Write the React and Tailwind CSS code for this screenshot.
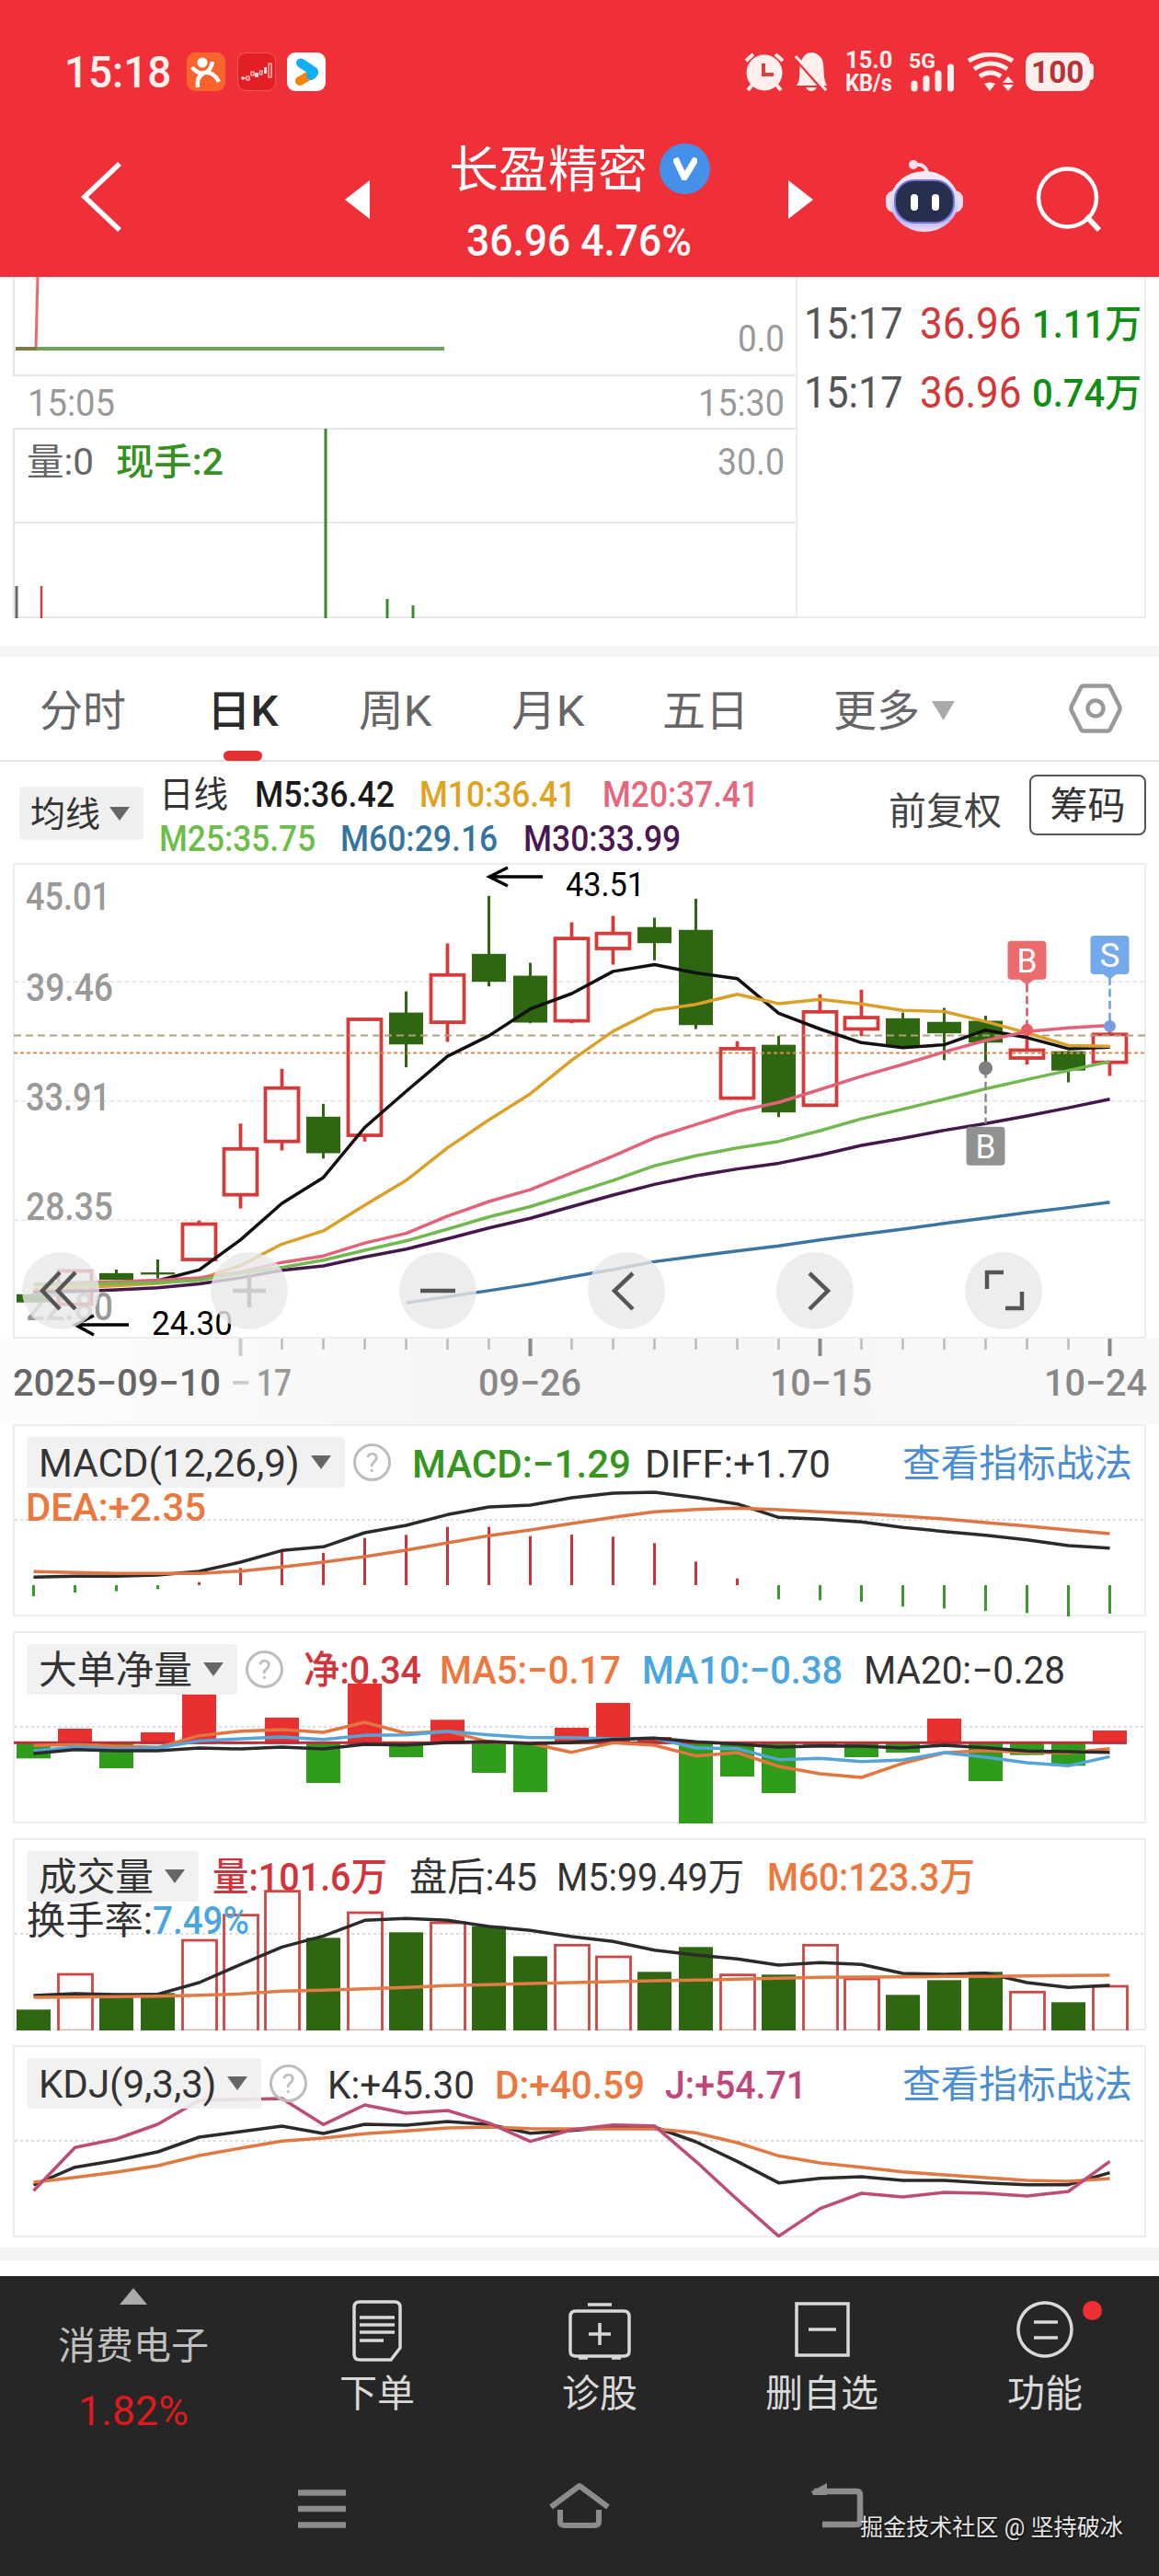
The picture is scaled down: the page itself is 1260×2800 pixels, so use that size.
import { useLayoutEffect, useRef, useState } from "react";

const FONT = "Roboto, 'Noto Sans CJK SC', sans-serif"
const RED = "#d43c3c"
const GREEN = "#2f6612"

// candles: [kind, high, top, bottom, low] in chart units
const candles = [
    ["g", 1252, 1252, 1275, 1275],
    ["r", 1185, 1187, 1280, 1280],
    ["g", 1183, 1193, 1212, 1212],
    ["g", 1155, 1191, 1197, 1208],
    ["r", 1046, 1056, 1155, 1160],
    ["r", 775, 846, 974, 1012],
    ["r", 622, 676, 825, 850],
    ["g", 720, 756, 858, 873],
    ["r", 480, 484, 808, 825],
    ["g", 406, 465, 554, 618],
    ["r", 272, 360, 492, 547],
    ["g", 139, 301, 379, 392],
    ["g", 326, 362, 493, 495],
    ["r", 213, 258, 488, 495],
    ["r", 195, 244, 286, 331],
    ["g", 200, 226, 271, 319],
    ["g", 147, 234, 500, 511],
    ["r", 545, 566, 704, 706],
    ["g", 530, 555, 744, 757],
    ["r", 414, 463, 724, 724],
    ["r", 401, 479, 511, 531],
    ["g", 465, 481, 559, 560],
    ["g", 452, 491, 523, 598],
    ["g", 474, 488, 549, 618],
    ["r", 520, 570, 592, 610],
    ["g", 573, 573, 627, 660],
    ["r", 500, 526, 604, 642],
]

const m5 = [1245, 1236, 1224, 1214, 1184, 1100, 998, 926, 786, 685, 587, 530, 455, 412, 350, 331, 354, 370, 467, 511, 549, 563, 555, 514, 535, 566, 562]
const m10 = [1238, 1234, 1228, 1222, 1210, 1172, 1112, 1075, 1003, 934, 843, 765, 692, 598, 517, 459, 442, 414, 440, 428, 441, 459, 462, 490, 522, 557, 559]
const m20 = [1224, 1220, 1217, 1213, 1206, 1190, 1163, 1145, 1109, 1082, 1034, 993, 960, 913, 866, 815, 778, 741, 716, 680, 643, 610, 575, 543, 518, 508, 501]
const m25 = [1226, 1224, 1222, 1220, 1213, 1193, 1177, 1157, 1129, 1103, 1070, 1036, 1007, 971, 934, 893, 865, 843, 825, 795, 762, 735, 707, 678, 652, 627, 602]
const m30 = [1246, 1244, 1240, 1234, 1223, 1206, 1185, 1173, 1148, 1126, 1097, 1067, 1040, 1007, 975, 945, 921, 902, 886, 863, 836, 816, 794, 775, 754, 731, 707]
const m60 = [1276, 1259, 1242, 1224, 1203, 1183, 1161, 1146, 1131, 1117, 1100, 1085, 1070, 1054, 1039, 1024, 1010, 995]

const diff = [552, 549, 549, 545, 533, 503, 465, 453, 407, 383, 348, 323, 317, 293, 278, 275, 292, 313, 357, 363, 372, 390, 403, 415, 430, 449, 457]
const dea = [534, 537, 540, 540, 540, 532, 519, 503, 485, 464, 440, 417, 398, 377, 357, 339, 331, 327, 332, 339, 345, 353, 362, 374, 385, 398, 410]
const macdBars = [614, 602, 598, 591, 568, 522, 465, 473, 424, 414, 388, 388, 418, 413, 420, 441, 501, 556, 624, 627, 632, 648, 654, 662, 669, 681, 671]

const netBars = [451, 357, 483, 369, 244, 399, 321, 531, 210, 447, 328, 498, 561, 354, 273, 384, 666, 510, 564, 410, 447, 432, 324, 525, 440, 475, 363]
const net5 = [412, 409, 414, 418, 380, 365, 360, 369, 336, 372, 365, 400, 405, 434, 403, 411, 446, 435, 480, 504, 516, 470, 436, 428, 434, 436, 422]
const net10 = [430, 417, 424, 420, 397, 390, 384, 392, 379, 377, 366, 377, 386, 386, 390, 388, 420, 422, 458, 454, 464, 459, 435, 450, 468, 478, 448]
const net20 = [438, 425, 429, 429, 420, 423, 417, 423, 408, 410, 402, 399, 406, 402, 392, 388, 400, 407, 417, 413, 414, 420, 411, 419, 430, 432, 434]

const volBars = [
    ["g", 582], ["r", 467], ["g", 540], ["g", 528], ["r", 356], ["r", 274], ["r", 196], ["g", 348], ["r", 266],
    ["g", 330], ["r", 299], ["g", 310], ["g", 408], ["r", 372], ["r", 410], ["g", 459], ["g", 378], ["r", 469],
    ["g", 468], ["r", 372], ["r", 482], ["g", 534], ["g", 486], ["g", 459], ["r", 525], ["g", 558], ["r", 506],
]
const vol5 = [536, 530, 533, 532, 494, 435, 378, 342, 291, 285, 291, 311, 324, 344, 360, 388, 404, 417, 437, 429, 435, 464, 467, 463, 494, 510, 503]
const vol60 = [542, 541, 540, 538, 535, 531, 522, 519, 514, 510, 504, 501, 497, 494, 491, 488, 486, 483, 480, 477, 476, 475, 474, 474, 472, 471, 470]

const kdjK = [495, 437, 415, 387, 339, 321, 303, 327, 297, 300, 288, 298, 326, 317, 305, 306, 354, 418, 488, 473, 468, 480, 480, 488, 494, 494, 455]
const kdjD = [486, 470, 453, 432, 399, 375, 352, 342, 328, 319, 309, 306, 311, 312, 312, 312, 325, 357, 400, 423, 437, 452, 462, 471, 480, 483, 474]
const kdjJ = [514, 373, 345, 297, 219, 216, 213, 298, 234, 261, 252, 293, 353, 315, 299, 302, 418, 542, 662, 572, 522, 534, 519, 522, 531, 516, 418]

const cx = (i) => 21.5 + 45 * i
const yk = (v) => (v - 47) / 2.5705
const scaleFrom = (top) => (v) => (v - top) / 3

// squeezes a line of text to the given width
function Fit({ w, className = "", children }) {
    const ref = useRef(null)
    const [scale, setScale] = useState(1)
    useLayoutEffect(() => {
        setScale(w / ref.current.offsetWidth)
    }, [w])
    return (
        <span className={`block shrink-0 whitespace-nowrap ${className}`} style={{ width: w }}>
            <span ref={ref} className="inline-block origin-left" style={{ transform: `scaleX(${scale})` }}>{children}</span>
        </span>
    )
}

function T({ x, y, w, size = 42, fill = "#333", weight = 400, children }) {
    return (
        <text x={x} y={y} textLength={w} lengthAdjust="spacingAndGlyphs" fontSize={size} fill={fill} fontWeight={weight} fontFamily={FONT}>
            {children}
        </text>
    )
}

function Line({ data, y, color, from = 0, width = 3.5 }) {
    return (
        <polyline
            points={data.map((v, i) => `${cx(i + from)},${y(v)}`).join(" ")}
            fill="none" stroke={color} strokeWidth={width} strokeLinejoin="round"
        />
    )
}

function Down({ className = "" }) {
    return <svg viewBox="0 0 22 15" className={`h-[15px] w-[22px] shrink-0 ${className}`}><path d="M0 0h22L11 15z" fill="currentColor"/></svg>
}

function Panel({ name, nameWidth, help, link, children }) {
    return (
        <div className="relative mx-[14px] h-[209px] w-[1232px] ring-2 ring-inset ring-[#ededed]">
            <svg viewBox="0 0 1232 209" className="block h-full w-full">
                <path d="M2 104H1230" stroke="#ddd" strokeWidth="2" strokeDasharray="3 3"/>
                <g transform="translate(1 0)">{children}</g>
            </svg>
            <div className="absolute inset-x-0 top-[14px] flex h-[55px] items-center pl-[15px] pr-[15px]">
                <div className="flex h-full items-center gap-[12px] rounded bg-[#efefef]/90 pl-[13px] pr-[15px] text-[42px] leading-none text-[#333]">
                    <Fit w={nameWidth} className="pt-[3px]">{name}</Fit>
                    <Down className="text-[#666]"/>
                </div>
                {help && (
                    <div className="ml-[9px] flex size-[41px] items-center justify-center rounded-full border-3 border-[#bdbdbd] text-[30px] leading-none text-[#bdbdbd]">?</div>
                )}
                {link && <Fit w={250} className="ml-auto pt-[4px] text-[41px] leading-none text-[#4a8dd2]">{link}</Fit>}
            </div>
        </div>
    )
}

function StatusBar() {
    return (
        <div className="flex h-[42px] items-center pl-[70px] text-[#fff0ee]">
            <Fit w={116} className="text-[49px] font-medium leading-none">15:18</Fit>
            <svg viewBox="0 0 42 42" className="ml-[17px] size-[42px]">
                <rect width="42" height="42" rx="9" fill="#f9642c"/>
                <circle cx="17" cy="11" r="5.5" fill="#fff"/>
                <path d="M6 16c4 6 9 7 14 6 5-2 7-6 8-12M19 22c8-1 13 4 16 10M18 23c-6 3-7 8-6 15" fill="none" stroke="#fff" strokeWidth="4.5"/>
            </svg>
            <svg viewBox="0 0 42 42" className="ml-[13px] size-[42px]">
                <rect x=".5" y=".5" width="41" height="41" rx="9" fill="#e31f26" stroke="#f25a52"/>
                <path d="M4 28h5M6 26v4" stroke="#ffd9d2" strokeWidth="1.6"/>
                <path d="M10 26h3v4h-3zM15 21h3v4h-3zM24.500 20h2.500v4h-2.500zM34 12h3v15h-3z" fill="none" stroke="#ffd9d2" strokeWidth="1.2"/>
                <path d="M19 22h4v5h-4zM29 16h3v7h-3z" fill="#ffd9d2"/>
            </svg>
            <svg viewBox="0 0 42 42" className="ml-[12px] size-[42px]">
                <rect width="42" height="42" rx="9" fill="#fff"/>
                <path d="M14 31L26 24" stroke="#f98209" strokeWidth="10" strokeLinecap="round"/>
                <path d="M15 11.500L28 20Q31 22 26 25" fill="none" stroke="#15aef5" strokeWidth="10" strokeLinecap="round" strokeLinejoin="round"/>
            </svg>
            <svg viewBox="0 0 44 42" className="ml-[455px] h-[42px] w-[44px]">
                <path d="M2 9l8-7M42 9l-8-7M9 35l-5 6M35 35l5 6" stroke="#fff0ee" strokeWidth="4"/>
                <circle cx="22" cy="22" r="19.500" fill="#fff0ee"/>
                <path d="M21 12v12h11" fill="none" stroke="#d9413f" strokeWidth="4"/>
            </svg>
            <svg viewBox="0 0 36 42" className="ml-[11px] h-[42px] w-[36px]">
                <path d="M2 36c5-7 2-14 4-23C8 4 13 0 18 0s12 4 13 12c1 10 0 17 4 24zM12 38h12q-2 4-6 4t-6-4z" fill="#fff0ee"/>
                <path d="M-1 4L34 44" stroke="#f03038" strokeWidth="4"/>
                <path d="M1 4L34 41" stroke="#fff0ee" strokeWidth="3"/>
            </svg>
            <div className="ml-[19px] flex flex-col text-[25px] font-bold leading-[25px]">
                <Fit w={51}>15.0</Fit>
                <Fit w={51}>KB/s</Fit>
            </div>
            <div className="ml-[18px] h-[42px] w-[50px]">
                <svg viewBox="0 0 50 42" className="size-full overflow-visible">
                    <T x="0" y="16.5" w="29" size={22} fill="#fff0ee" weight={700}>5G</T>
                    <path d="M6 34v5M19 28.500v10.500M32 23v16M45.500 16v23" stroke="#fff0ee" strokeWidth="7" strokeLinecap="round"/>
                </svg>
            </div>
            <svg viewBox="0 0 52 42" className="ml-[13px] h-[42px] w-[52px]">
                <path d="M2 9Q26-5 50 9M8 18Q26 6 44 18M14 26Q26 18 37 26" fill="none" stroke="#fff0ee" strokeWidth="5"/>
                <path d="M19 34q6-3 12 0l-6 8zM39 33l6-7 6 7zM39 35l6 7 6-7z" fill="#fff0ee"/>
            </svg>
            <div className="ml-[12px] flex h-[42px] w-[70px] items-center justify-center rounded-[12px] bg-[#fff0ee] text-[34px] font-bold leading-none text-[#b73335]">
                <Fit w={58}>100</Fit>
            </div>
            <div className="h-[18px] w-[4px] rounded-r bg-[#fff0ee]"/>
        </div>
    )
}

function Header() {
    return (
        <header className="h-[301px] bg-[#f03038] pt-[57px] text-white">
            <StatusBar/>
            <div className="flex h-[202px] items-start pl-[88px]">
                <svg viewBox="0 0 46 78" className="mt-[76px] h-[78px] w-[46px]"><path d="M42 3L4 39l38 36" fill="none" stroke="#fff" strokeWidth="5.500"/></svg>
                <svg viewBox="0 0 27 42" className="ml-[241px] mt-[97px] h-[42px] w-[27px]"><path d="M27 0v42L0 21z" fill="#fff"/></svg>
                <div className="ml-[86px] w-[291px]">
                    <div className="mt-[56px] flex items-center">
                        <span className="text-[54px] leading-[62px]">长盈精密</span>
                        <div className="-mt-[6px] ml-[13px] flex size-[55px] items-center justify-center rounded-full bg-[#4590e8]">
                            <svg viewBox="0 0 26 25" className="h-[25px] w-[26px]"><path d="M2 1l10 21L25 1" fill="none" stroke="#fff" strokeWidth="7"/></svg>
                        </div>
                    </div>
                    <Fit w={245} className="ml-[19px] mt-[20px] text-[48px] font-medium leading-[50px]">36.96 4.76%</Fit>
                </div>
                <svg viewBox="0 0 27 42" className="ml-[78px] mt-[97px] h-[42px] w-[27px]"><path d="M0 0v42L27 21z" fill="#fff"/></svg>
                <svg viewBox="0 0 84 78" className="ml-[79px] mt-[75px] h-[78px] w-[84px]">
                    <defs>
                        <linearGradient id="shell" x1="0" y1="0" x2="0" y2="1">
                            <stop offset="0" stopColor="#fbeef5"/>
                            <stop offset=".5" stopColor="#d5dcfa"/>
                            <stop offset=".8" stopColor="#b9b4f2"/>
                            <stop offset="1" stopColor="#eddcf3"/>
                        </linearGradient>
                    </defs>
                    <path d="M31 5q12-2 14 9" fill="none" stroke="#f9e4ec" strokeWidth="4"/>
                    <circle cx="30" cy="5" r="5" fill="#f5dfea"/>
                    <rect x="0" y="33" width="84" height="24" rx="9" fill="#f0dcf0"/>
                    <ellipse cx="42" cy="45" rx="37" ry="33" fill="url(#shell)"/>
                    <rect x="10" y="22" width="64" height="46" rx="21" fill="#26304e" stroke="#7472d8" strokeWidth="2"/>
                    <path d="M31 41v10M54 41v10" stroke="#fff" strokeWidth="8" strokeLinecap="round"/>
                </svg>
                <svg viewBox="0 0 72 72" className="ml-[79px] mt-[82px] size-[72px]">
                    <circle cx="34.500" cy="34" r="31.500" fill="none" stroke="#fff" strokeWidth="4.500"/>
                    <path d="M55 54l14 15" stroke="#fff" strokeWidth="5.500"/>
                </svg>
            </div>
        </header>
    )
}

function AfterHours() {
    return (
        <section className="flex h-[401px] pl-[14px] pr-[14px]">
            <svg viewBox="0 0 853 371" className="h-[371px] w-[853px]">
                <path d="M1 0V107H853M1 370V165H853M1 370H853M1 267H853" fill="none" stroke="#e6e6e6" strokeWidth="2"/>
                <path d="M852 0V370" stroke="#ececec" strokeWidth="2"/>
                <path d="M27 0L25 78" stroke="#ea6a64" strokeWidth="3"/>
                <path d="M3 78H469" stroke="#6fa35c" strokeWidth="4"/>
                <path d="M3 78H26" stroke="#7d7a45" strokeWidth="4"/>
                <path d="M340 165V371M407 350V371M435 357V371" stroke="#3a8a2a" strokeWidth="3"/>
                <path d="M4 336V371" stroke="#666" strokeWidth="3"/>
                <path d="M31 336V371" stroke={RED} strokeWidth="2.500"/>
                <T x="788" y="81" w="51" size={40} fill="#999">0.0</T>
                <T x="16" y="151" w="95" size={40} fill="#999">15:05</T>
                <T x="745" y="151" w="94" size={40} fill="#999">15:30</T>
                <T x="766" y="215" w="73" size={40} fill="#999">30.0</T>
                <T x="15" y="215" w="73" size={40} fill="#666">量:0</T>
                <T x="112" y="215" w="117" size={40} fill="#35921f" weight={500}>现手:2</T>
            </svg>
            <div className="h-[371px] w-[379px] border-b-2 border-r-2 border-[#eee] pl-[7px] pt-[13px]">
                {["1.11万", "0.74万"].map((amount) => (
                    <div key={amount} className="flex h-[75px] items-center text-[48px] leading-none text-[#555]">
                        <Fit w={108}>15:17</Fit>
                        <Fit w={111} className="ml-[18px] text-[#d5363a]">36.96</Fit>
                        <Fit w={119} className="ml-[11px] pt-[2px] text-[42px] font-medium text-[#0f8f14]">{amount}</Fit>
                    </div>
                ))}
            </div>
        </section>
    )
}

function Tabs() {
    return (
        <div className="flex h-[114px] items-center border-b-2 border-[#e4e4e4] pl-[43px] pt-[4px] text-[47px] leading-none text-[#666]">
            <span className="w-[94px]">分时</span>
            <div className="relative ml-[88px] font-medium text-[#2b2b2b]">
                <Fit w={78}>日K</Fit>
                <div className="absolute -bottom-[31px] left-[18px] h-[11px] w-[42px] rounded-full bg-[#e53033]"/>
            </div>
            <Fit w={80} className="ml-[87px]">周K</Fit>
            <Fit w={80} className="ml-[86px]">月K</Fit>
            <span className="ml-[84px]">五日</span>
            <span className="ml-[92px]">更多</span>
            <svg viewBox="0 0 25 21" className="ml-[13px] h-[21px] w-[25px]"><path d="M0 0h25L12.500 21z" fill="#aaa"/></svg>
            <svg viewBox="0 0 58 54" className="-mt-[4px] ml-[124px] h-[54px] w-[58px]">
                <path d="M16 2.500h26q2 0 3 2l10 20q1 2.500 0 5l-10 20q-1 2-3 2H16q-2 0-3-2l-10-20q-1-2.500 0-5l10-20q1-2 3-2z" fill="none" stroke="#999" strokeWidth="4.500"/>
                <circle cx="29" cy="27" r="8.500" fill="none" stroke="#999" strokeWidth="4.500"/>
            </svg>
        </div>
    )
}

function AverageRow() {
    return (
        <div className="flex h-[110px] items-start pl-[21px]">
            <div className="mt-[27px] flex h-[58px] w-[135px] items-center gap-[10px] rounded bg-[#f0f0f0] pl-[12px] text-[38px] leading-none text-[#333]">
                <span className="pt-[2px]">均线</span>
                <Down className="text-[#666]"/>
            </div>
            <div className="ml-[17px] mt-[12px] w-[760px] text-[39px] leading-[48px]">
                <div className="flex">
                    <Fit w={75} className="text-[#333]">日线</Fit>
                    <Fit w={152} className="ml-[29px] font-medium text-[#1a1a1a]">M5:36.42</Fit>
                    <Fit w={170} className="ml-[27px] font-medium text-[#dfa31f]">M10:36.41</Fit>
                    <Fit w={170} className="ml-[29px] font-medium text-[#e8667c]">M20:37.41</Fit>
                </div>
                <div className="flex">
                    <Fit w={170} className="font-medium text-[#6dbd4b]">M25:35.75</Fit>
                    <Fit w={171} className="ml-[27px] font-medium text-[#34749f]">M60:29.16</Fit>
                    <Fit w={171} className="ml-[28px] font-medium text-[#4a1850]">M30:33.99</Fit>
                </div>
            </div>
            <span className="ml-[33px] mt-[33px] text-[41px] leading-[42px] text-[#444]">前复权</span>
            <div className="ml-[30px] mt-[14px] flex h-[66px] w-[127px] items-center justify-center rounded-lg border-2 border-[#555] pt-[3px] text-[41px] leading-none text-[#333]">筹码</div>
        </div>
    )
}

function Marker({ i, top, color, letter }) {
    return (
        <g>
            <rect x={cx(i) - 21} y={top} width="42" height="42" rx="4" fill={color}/>
            <T x={cx(i) - 11} y={top + 34} w="22" size={37} fill="#fff">{letter}</T>
        </g>
    )
}

function KChart() {
    const buttons = [
        ["M41 22L22 42l19 20M58 22L39 42l19 20", "#555"],
        ["M24 42h36M42 24v36", "#cbcbcb"],
        ["M23 42h38", "#555"],
        ["M49 23L29 42l20 20", "#555"],
        ["M36 23l20 19-20 20", "#555"],
        ["M24 40V22h18M44 61h18V43", "#555"],
    ]
    return (
        <div className="relative mx-[14px] h-[517px] w-[1232px] ring-2 ring-inset ring-[#ededed]">
            <svg viewBox="-1 0 1232 517" className="block h-full w-full">
                {[379, 712, 1045].map((v) => (
                    <path key={v} d={`M0 ${yk(v)}H1231`} stroke="#e3e3e3" strokeWidth="1.500" strokeDasharray="5 3"/>
                ))}
                <T x="13" y={yk(177)} w="92" fill="#999" weight={500}>45.01</T>
                <T x="13" y={yk(433)} w="95" fill="#999" weight={500}>39.46</T>
                <T x="13" y={yk(738)} w="92" fill="#999" weight={500}>33.91</T>
                <T x="13" y={yk(1045)} w="95" fill="#999" weight={500}>28.35</T>
                <T x="13" y={yk(1325)} w="95" fill="#999" weight={500}>22.80</T>
                {candles.map(([kind, high, top, bottom, low], i) => kind === "g" ? (
                    <g key={i} fill={GREEN}>
                        <rect x={cx(i) - 1.5} y={yk(high)} width="3" height={yk(low) - yk(high)}/>
                        <rect x={cx(i) - 18.5} y={yk(top)} width="37" height={yk(bottom) - yk(top)}/>
                    </g>
                ) : (
                    <g key={i} stroke={RED} strokeWidth="3.8" fill="none">
                        <path d={`M${cx(i)} ${yk(high)}V${yk(top)}M${cx(i)} ${yk(bottom)}V${yk(low)}`}/>
                        <rect x={cx(i) - 18} y={yk(top)} width="36" height={yk(bottom) - yk(top)}/>
                    </g>
                ))}
                <path d={`M0 ${yk(529)}H1231`} stroke="#b0a07c" strokeWidth="2" strokeDasharray="8 5"/>
                <path d={`M0 ${yk(578)}H1231`} stroke="#dd8a50" strokeWidth="2" strokeDasharray="4 3"/>
                <Line data={m5} y={yk} color="#111"/>
                <Line data={m10} y={yk} color="#dba028"/>
                <Line data={m30} y={yk} color="#45174b"/>
                <Line data={m20} y={yk} color="#e0637a"/>
                <Line data={m25} y={yk} color="#71b94f"/>
                <Line data={m60} y={yk} color="#3a769f" from={9}/>
                <path d="M575 15h-58M537 5l-20 10 20 10" fill="none" stroke="#000" strokeWidth="3.5"/>
                <T x="600" y={yk(140)} w="86" size={37} fill="#000">43.51</T>
                <path d="M125 502H68M87 492l-20 10 20 11" fill="none" stroke="#000" strokeWidth="3.5"/>
                <T x="150" y={yk(1365)} w="88" size={37} fill="#000">24.30</T>

                <path d={`M${cx(24)} ${yk(385)}V${yk(505)}`} stroke="#dd5560" strokeWidth="2.5" strokeDasharray="9 4"/>
                <circle cx={cx(24)} cy={yk(513)} r="6.5" fill="#ea5a62"/>
                <path d={`M${cx(24) - 9} ${yk(370)}h18l-9 7z`} fill="#ec6b6c"/>
                <Marker i={24} top={yk(265)} color="#ec6b6c" letter="B"/>
                <path d={`M${cx(26)} ${yk(365)}V${yk(500)}`} stroke="#6d9fe6" strokeWidth="2.5" strokeDasharray="9 4"/>
                <circle cx={cx(26)} cy={yk(503)} r="6.500" fill="#7b9de0"/>
                <path d={`M${cx(26) - 9} ${yk(354)}h18l-9 7z`} fill="#74aaec"/>
                <Marker i={26} top={yk(250)} color="#74aaec" letter="S"/>
                <path d={`M${cx(23)} ${yk(625)}V${yk(775)}`} stroke="#888" strokeWidth="2.5" strokeDasharray="9 4"/>
                <circle cx={cx(23)} cy={yk(620)} r="7.500" fill="#7f7f7f"/>
                <Marker i={23} top={yk(784)} color="#8f928f" letter="B"/>
            </svg>
            <div className="absolute left-[10px] top-[423px] flex gap-[121px]">
                {buttons.map(([d, color], i) => (
                    <svg key={i} viewBox="0 0 84 84" className="size-[84px] rounded-full bg-[#e9e9e9]/80">
                        <path d={d} fill="none" stroke={color} strokeWidth="4.500"/>
                    </svg>
                ))}
            </div>
        </div>
    )
}

function DateAxis() {
    return (
        <div className="h-[93px] bg-gradient-to-r from-[#fdfdfd] via-[#f6f4f5] to-[#faf9fa] pl-[15px]">
            <svg viewBox="0 0 1245 93" className="h-[93px] w-[1245px]">
                {candles.map((_, i) => i >= 5 && (
                    <path
                        key={i}
                        d={i % 7 === 5 ? `M${cx(i)} 0V19` : `M${cx(i)} 0V12`}
                        stroke={i === 5 ? "#ccc" : i % 7 === 5 ? "#888" : "#bbb"}
                        strokeWidth={i % 7 === 5 ? 4 : 2.5}
                    />
                ))}
                <T x="-1" y="62" w="226" size={40} fill="#666" weight={500}>2025−09−10</T>
                <T x="235" y="62" w="23" size={40} fill="#ccc" weight={500}>−</T>
                <T x="264" y="62" w="38" size={40} fill="#999" weight={500}>17</T>
                <T x="505" y="62" w="112" size={40} fill="#888" weight={500}>09−26</T>
                <T x="822" y="62" w="111" size={40} fill="#888" weight={500}>10−15</T>
                <T x="1120" y="62" w="112" size={40} fill="#888" weight={500}>10−24</T>
            </svg>
        </div>
    )
}

function Indicators() {
    const ym = scaleFrom(53)
    const yn = scaleFrom(39)
    const yv = scaleFrom(23)
    return (
        <div className="flex flex-col gap-[16px]">
            <Panel name="MACD(12,26,9)" nameWidth={284} help link="查看指标战法">
                {macdBars.map((v, i) => (
                    <path key={i} d={`M${cx(i)} ${ym(578)}V${ym(v)}`} stroke={v < 578 ? "#c9353a" : "#3a982c"} strokeWidth="3"/>
                ))}
                <Line data={diff} y={ym} color="#2b2b2b"/>
                <Line data={dea} y={ym} color="#dd7545"/>
                <T x="433" y="58" w="238" fill="#35971f" weight={500}>MACD:−1.29</T>
                <T x="686" y="58" w="202">DIFF:+1.70</T>
                <T x="13" y="105" w="196" fill="#ec7840" weight={500}>DEA:+2.35</T>
            </Panel>
            <Panel name="大单净量" nameWidth={167} help>
                {netBars.map((v, i) => (
                    <rect
                        key={i} x={cx(i) - 18.5} width="37" fill={v < 404 ? "#e8302f" : "#2f9c1b"}
                        y={v < 404 ? yn(v) : yn(404)} height={Math.abs(v - 404) / 3 + 1}
                    />
                ))}
                <path d={`M0 ${yn(403)}H${cx(26) + 18}`} stroke="#b5303a" strokeWidth="3"/>
                <Line data={net5} y={yn} color="#e27540"/>
                <Line data={net10} y={yn} color="#55a4d8"/>
                <Line data={net20} y={yn} color="#2b2b2b"/>
                <T x="315" y="57" w="128" fill="#d3333a" weight={500}>净:0.34</T>
                <T x="463" y="57" w="197" fill="#ec7840" weight={500}>MA5:−0.17</T>
                <T x="683" y="57" w="218" fill="#4aa6de" weight={500}>MA10:−0.38</T>
                <T x="924" y="57" w="219">MA20:−0.28</T>
            </Panel>
            <Panel name="成交量" nameWidth={125}>
                {volBars.map(([kind, v], i) => kind === "g" ? (
                    <rect key={i} x={cx(i) - 18.5} y={yv(v)} width="37" height={yv(656) - yv(v)} fill={GREEN}/>
                ) : (
                    <rect key={i} x={cx(i) - 18} y={yv(v)} width="37" height={yv(653) - yv(v)} fill="none" stroke="#cf4745" strokeWidth="2.800"/>
                ))}
                <Line data={vol5} y={yv} color="#2b2b2b"/>
                <Line data={vol60} y={yv} color="#e27c45"/>
                <T x="216" y="57" w="190" fill="#d3333a" weight={500}>量:101.6万</T>
                <T x="430" y="57" w="139">盘后:45</T>
                <T x="590" y="57" w="204">M5:99.49万</T>
                <T x="819" y="57" w="226" fill="#ec7840" weight={500}>M60:123.3万</T>
                <T x="14" y="104" w="137">换手率:</T>
                <T x="151" y="104" w="105" fill="#4aa6de" weight={500}>7.49%</T>
            </Panel>
            <Panel name="KDJ(9,3,3)" nameWidth={193} help link="查看指标战法">
                <Line data={kdjK} y={yn} color="#2b2b2b"/>
                <Line data={kdjD} y={yn} color="#e07a42"/>
                <Line data={kdjJ} y={yn} color="#bd4c77"/>
                <T x="341" y="58" w="160">K:+45.30</T>
                <T x="523" y="58" w="163" fill="#ec7840" weight={500}>D:+40.59</T>
                <T x="708" y="58" w="154" fill="#c0477c" weight={500}>J:+54.71</T>
            </Panel>
        </div>
    )
}

const actions = [
    { label: "下单", margin: "ml-[140px]", icon: "M11 2h38q6 0 6 6v44l-10 13H11q-6 0-6-6V8q0-6 6-6zM11 19h38M11 27h38M11 35h38M11 44h26" },
    { label: "诊股", margin: "ml-[160px]", icon: "M4 12h52q6 0 6 6v38q0 5-6 5H4q-6 0-6-5V18q0-6 6-6zM17 5h26M30 25v24M18 37h24M7 63h10M43 63h10" },
    { label: "删自选", margin: "ml-[139px]", icon: "M2 4h56v56H2zM15 32h30" },
    { label: "功能", margin: "ml-[140px]", icon: "M30 3a29 29 0 1 1-.1 0zM18 24h26M18 41h26", badge: true },
]

function BottomBar() {
    return (
        <footer className="h-[326px] bg-[#262626] text-[#d9d9d9]">
            <div className="flex h-[200px] pl-[61px] text-[41px] leading-[42px]">
                <div className="flex w-[168px] flex-col items-center text-[#bfbfbf]">
                    <svg viewBox="0 0 30 18" className="mt-[13px] h-[18px] w-[30px] shrink-0"><path d="M15 0l15 18H0z" fill="#aaa"/></svg>
                    <span className="mt-[24px] whitespace-nowrap">消费电子</span>
                    <Fit w={120} className="mt-[29px] text-[44px] text-[#de1a1a]">1.82%</Fit>
                </div>
                {actions.map((a) => (
                    <div key={a.label} className={`relative flex shrink-0 flex-col items-center ${a.margin}`}>
                        <svg viewBox="0 0 60 66" className="mt-[26px] h-[66px] w-[60px] overflow-visible"><path d={a.icon} fill="none" stroke="#d9d9d9" strokeWidth="3.500"/></svg>
                        <span className="mt-[15px]">{a.label}</span>
                        {a.badge && <div className="absolute left-[82px] top-[27px] size-[21px] rounded-full bg-[#ef2f33]"/>}
                    </div>
                ))}
            </div>
            <div className="relative flex h-[126px] items-start pl-[324px]">
                <svg viewBox="0 0 52 42" className="mt-[32px] h-[42px] w-[52px]"><path d="M0 3.500h52M0 21h52M0 38.500h52" stroke="#8c8c8c" strokeWidth="6.500"/></svg>
                <svg viewBox="0 0 66 50" className="ml-[221px] mt-[24px] h-[50px] w-[66px]">
                    <path d="M2 27L33 4l31 23M12 30v13q0 4 5 4h32q5 0 5-4V30" fill="none" stroke="#8c8c8c" strokeWidth="6" strokeLinejoin="round"/>
                </svg>
                <svg viewBox="0 0 58 50" className="ml-[219px] mt-[24px] h-[50px] w-[58px]">
                    <path d="M3 10h46q4 0 4 4v29q0 3-4 3H12" fill="none" stroke="#8c8c8c" strokeWidth="6.500" strokeLinejoin="round"/>
                    <path d="M0 10L17 1v13H2z" fill="#8c8c8c"/>
                </svg>
                <Fit w={286} className="absolute left-[935px] top-[60px] text-[25px] leading-[28px] text-[#e6e6e6] [text-shadow:1px_1px_2px_#000]">掘金技术社区 @ 坚持破冰</Fit>
            </div>
        </footer>
    )
}

export default function App() {
    return (
        <div className="h-[2800px] w-[1260px] overflow-hidden bg-white font-[Roboto,'Noto_Sans_CJK_SC',sans-serif]">
            <Header/>
            <AfterHours/>
            <div className="h-[12px] bg-[#f5f5f5]"/>
            <Tabs/>
            <AverageRow/>
            <KChart/>
            <DateAxis/>
            <Indicators/>
            <div className="mt-[11px] h-[14px] bg-[#f4f4f4]"/>
            <div className="h-[17px]"/>
            <BottomBar/>
        </div>
    )
}
